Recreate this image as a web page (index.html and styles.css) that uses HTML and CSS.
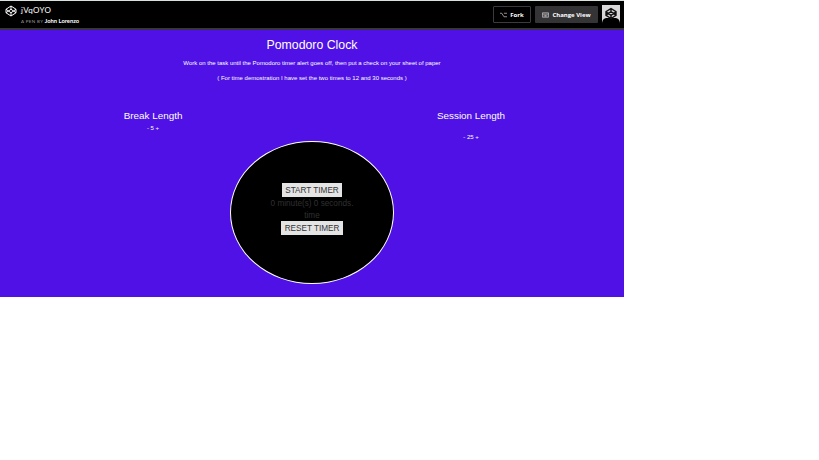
FILE: index.html
```html
<!DOCTYPE html>
<html lang="en">
<head>
<meta charset="utf-8">
<title>Pomodoro Clock</title>
<link rel="stylesheet" href="styles.css">
</head>
<body>
<div class="page">
  <header class="bar">
    <svg class="logo" viewBox="0 0 24 24"><path d="M12 2 22 8.500v7L12 22 2 15.500v-7zM12 2v6.500M12 15.500V22M2 8.500l10 7 10-7M2 15.500l10-7 10 7"/></svg>
    <div class="pen">
      <div class="pen-name">jVqOYO</div>
      <div class="byline"><span class="by">A PEN BY</span> <b>John Lorenzo</b></div>
    </div>
    <div class="actions">
      <button class="btn fork"><svg class="icon" viewBox="0 0 8 6"><path d="M0 1h2l2.500 4H8M4.500 1H8"/></svg><span>Fork</span></button>
      <button class="btn view"><svg class="icon" viewBox="0 0 8 6"><path d="M.5.5h7v5h-7zM.5 2h7M2.500 3v2M4 3v2M5.500 3v2"/></svg><span>Change View</span></button>
      <svg class="avatar" viewBox="0 0 18 19"><path class="paper" d="M0 0h18v19H0z"/><path class="figure" d="M0 19c0-4 2-6 5-6h8c3 0 5 2 5 6z"/><path class="mark" d="m9 3.500 5 3.200v3.600L9 13.500 4 10.300V6.700zM9 3.500v3M9 10.500v3M4 6.700l5 3.600 5-3.600M4 10.300l5-3.600 5 3.600"/></svg>
    </div>
  </header>
  <main class="content">
    <h1>Pomodoro Clock</h1>
    <p>Work on the task until the Pomodoro timer alert goes off, then put a check on your sheet of paper</p>
    <p>( For time demostration I have set the two times to 12 and 30 seconds )</p>
    <div class="lengths">
      <section><h2>Break Length</h2><div class="adjust">- 5 +</div></section>
      <section class="session"><h2>Session Length</h2><div class="adjust">- 25 +</div></section>
    </div>
    <div class="clock">
      <button class="timer start">START TIMER</button>
      <div class="status">0 minute(s) 0 seconds.</div>
      <div class="status">time</div>
      <button class="timer reset">RESET TIMER</button>
    </div>
  </main>
</div>
</body>
</html>
```
FILE: styles.css
```css
* { box-sizing: border-box; }
body { margin: 0; background: #fff; font-family: "Liberation Sans", Arial, sans-serif; }
h1, h2, p { margin: 0; font-weight: 400; white-space: nowrap; }
button { margin: 0; padding: 0; border: 0; font: inherit; white-space: nowrap; }
.page { width: 624px; height: 297px; background: #4f11e5; color: #fff; overflow: hidden; }

.bar { height: 30px; padding: 4px 4px 0 5px; display: flex; align-items: flex-start; background: #000; border-top: 1px solid #d9e2dc; border-bottom: 2px solid #35353a; font-family: "Open Sans", sans-serif; }
.logo { width: 12px; height: 12px; fill: none; stroke: #fff; stroke-width: 2; stroke-linejoin: round; }
.pen { margin-left: 4px; white-space: nowrap; }
.pen-name { font-family: Lato, sans-serif; font-size: 8px; line-height: 10px; letter-spacing: .3px; }
.byline { font-family: Lato, sans-serif; font-size: 5.800px; line-height: 9px; margin-top: 1px; }
.by { color: #999; font-size: 4.500px; letter-spacing: .35px; }
.actions { margin-left: auto; display: flex; }
.btn { display: flex; align-items: center; justify-content: center; height: 17px; margin-top: 1px; gap: 3px; color: #fff; background: #000; font-size: 6px; font-weight: 700; border-radius: 1px; }
.fork { width: 38px; border: 1px solid #3b3b3f; }
.view { width: 63px; margin-left: 4px; background: #343437; }
.icon { width: 7px; height: 6px; fill: none; stroke: #ccc; stroke-width: .8; }
.avatar { width: 18px; height: 19px; margin-left: 4px; }
.paper { fill: #d8d8d8; }
.figure { fill: #000; }
.mark { fill: #d8d8d8; stroke: #111; stroke-width: 1.4; }

.content { text-align: center; padding-top: 7px; }
h1 { font-size: 12.300px; line-height: 16px; }
p { font-size: 6px; line-height: 8px; margin-top: 7px; }
h1 + p { margin-top: 6px; }
.lengths { display: flex; justify-content: space-between; margin-top: 27px; padding: 0 94px; height: 32px; }
.lengths section { width: 118px; }
h2 { font-size: 9.900px; line-height: 13px; }
.adjust { font-size: 6px; line-height: 8px; margin-top: 2px; }
.session .adjust { margin-top: 11px; }
.clock { width: 164px; height: 143px; margin: 0 auto; padding-top: 41px; border: 1px solid #fff; border-radius: 50%; background: #000; display: flex; flex-direction: column; align-items: center; }
.timer { height: 14px; background: #e4e4e4; color: #333; font-size: 8.200px; line-height: 15px; }
.start { width: 60px; }
.reset { width: 62px; }
.status { height: 12px; font-size: 8.200px; line-height: 14px; color: #303030; white-space: nowrap; }
```
